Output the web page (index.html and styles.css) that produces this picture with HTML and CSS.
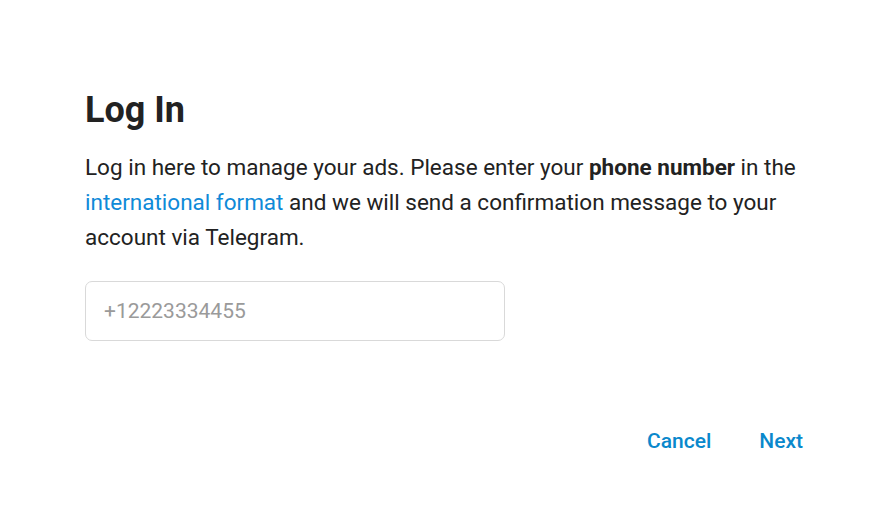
FILE: index.html
```html
<!DOCTYPE html>
<html lang="en">
<head>
<meta charset="utf-8">
<title>Log In</title>
<link rel="stylesheet" href="styles.css">
</head>
<body>
<main class="dialog">
  <h1 class="title">Log In</h1>
  <p class="intro">Log in here to manage your ads. Please enter your <b>phone number</b> in the <a class="link" href="#">international format</a> and we will send a confirmation message to your account via Telegram.</p>
  <input class="phone" type="text" placeholder="+12223334455">
  <div class="actions">
    <button class="btn" type="button">Cancel</button>
    <button class="btn" type="button">Next</button>
  </div>
</main>
</body>
</html>
```
FILE: styles.css
```css
html, body {
  margin: 0;
  background: #fff;
}
body {
  font-family: Roboto, "Noto Sans", sans-serif;
  color: #222;
}
.dialog {
  padding: 88px 68px 0 85px;
}
.title {
  margin: 0;
  font-size: 36px;
  line-height: 44px;
  font-weight: 700;
}
.intro {
  margin: 18px 0 0;
  font-size: 22.5px;
  line-height: 35px;
  max-width: 725px;
}
.intro b { font-weight: 700; }
.link {
  color: #0f8ad8;
  text-decoration: none;
}
.phone {
  display: block;
  box-sizing: border-box;
  margin-top: 26px;
  width: 420px;
  height: 60px;
  border: 1px solid #d9d9d9;
  border-radius: 7px;
  padding: 0 18px;
  font-family: inherit;
  font-size: 21px;
  color: #222;
  outline: none;
}
.phone::placeholder { color: #9a9a9a; }
.actions {
  display: flex;
  justify-content: flex-end;
  gap: 24px;
  margin-top: 84px;
  margin-right: 1px;
}
.btn {
  background: none;
  border: none;
  padding: 4px 12px;
  font-family: inherit;
  font-size: 21px;
  font-weight: 500;
  color: #0a88cc;
  cursor: pointer;
}
```
